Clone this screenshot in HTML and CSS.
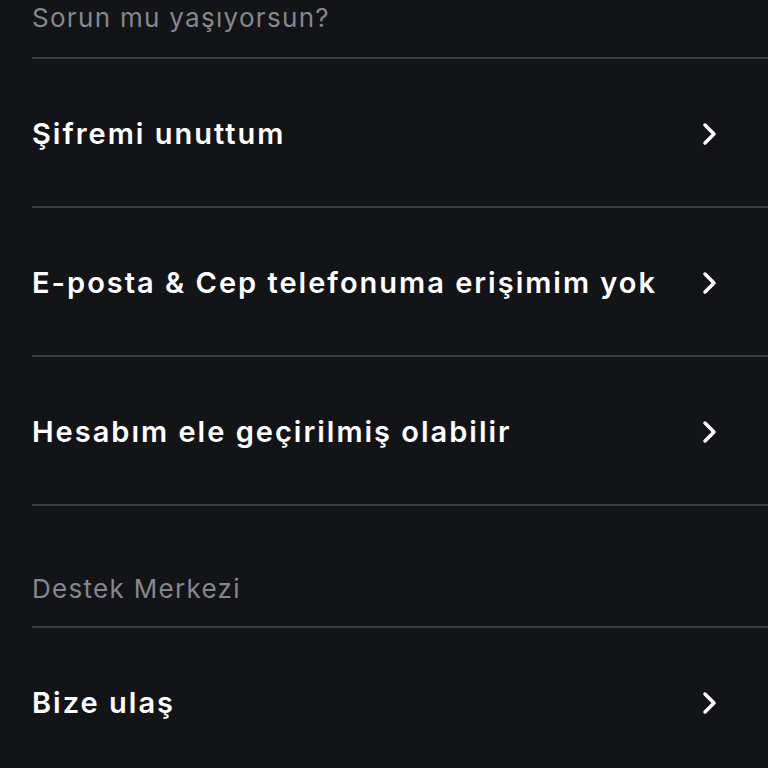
FILE: index.html
```html
<!DOCTYPE html>
<html lang="tr">
<head>
    <meta charset="UTF-8">
    <meta name="viewport" content="width=device-width, initial-scale=1.0">
    <title>Yardım</title>
    <link rel="stylesheet" href="styles.css">
</head>
<body>
    <div class="help">
        <div class="section-title first">Sorun mu yaşıyorsun?</div>
        <a class="row" href="#">
            <span class="label">Şifremi unuttum</span>
            <svg class="chevron" viewBox="0 0 18 26"><path d="M4 4 L13 13 L4 22"/></svg>
        </a>
        <a class="row" href="#">
            <span class="label">E-posta &amp; Cep telefonuma erişimim yok</span>
            <svg class="chevron" viewBox="0 0 18 26"><path d="M4 4 L13 13 L4 22"/></svg>
        </a>
        <a class="row" href="#">
            <span class="label">Hesabım ele geçirilmiş olabilir</span>
            <svg class="chevron" viewBox="0 0 18 26"><path d="M4 4 L13 13 L4 22"/></svg>
        </a>

        <div class="section-title">Destek Merkezi</div>
        <a class="row" href="#">
            <span class="label">Bize ulaş</span>
            <svg class="chevron" viewBox="0 0 18 26"><path d="M4 4 L13 13 L4 22"/></svg>
        </a>
    </div>
</body>
</html>
```

FILE: styles.css
```css
body {
    margin: 0;
    background: #131418;
    font-family: Inter, "Noto Sans", sans-serif;
    height: 768px;
    overflow: hidden;
}
.help {
    padding-left: 32px;
}
.section-title {
    height: 122px;
    box-sizing: border-box;
    padding-top: 67px;
    border-bottom: 2px solid #3a3b3f;
    color: #86878b;
    font-size: 26px;
    line-height: 32px;
    letter-spacing: 1.3px;
}
.section-title.first {
    height: 59px;
    padding-top: 2px;
}
.row {
    display: flex;
    align-items: center;
    justify-content: space-between;
    box-sizing: border-box;
    height: 149px;
    padding: 2px 49px 0 0;
    border-bottom: 2px solid #3a3b3f;
    color: #ffffff;
    text-decoration: none;
}
.label {
    font-size: 29px;
    font-weight: 600;
    letter-spacing: 2px;
}
.chevron {
    width: 18px;
    height: 26px;
    fill: none;
    stroke: #ffffff;
    stroke-width: 3.5;
    stroke-linecap: round;
    stroke-linejoin: round;
}
```
